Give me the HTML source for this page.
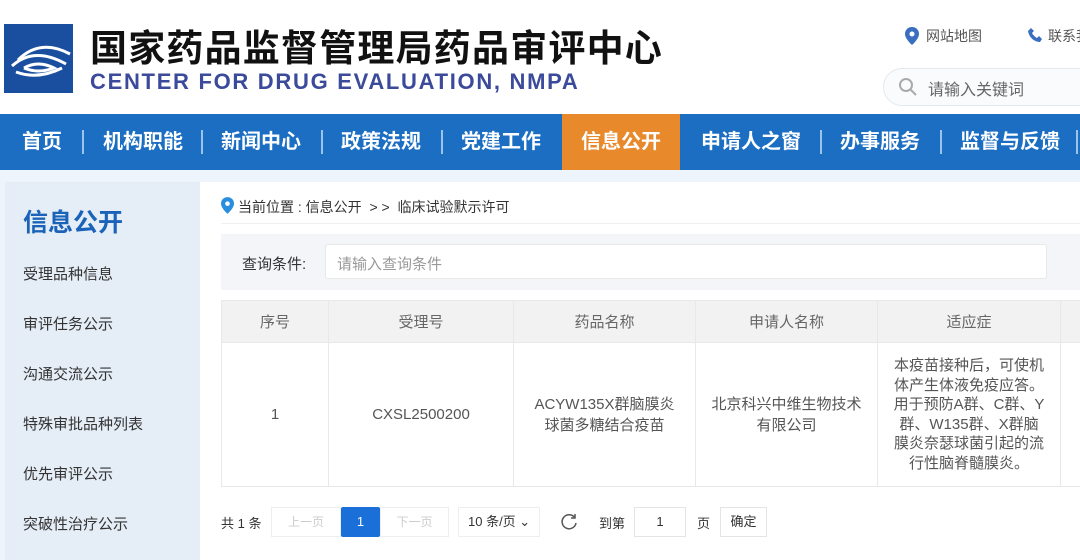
<!DOCTYPE html>
<html><head><meta charset="utf-8"><style>
*{margin:0;padding:0;box-sizing:border-box}
body{width:1080px;height:560px;overflow:hidden;background:#fff;font-family:"Liberation Sans","Noto Sans CJK SC",sans-serif;position:relative;color:#333}
.a{position:absolute;white-space:nowrap}
.nav{position:absolute;left:0;top:114px;width:1080px;height:56px;background:#1b6ec2}
.nav span{position:absolute;top:0;height:56px;line-height:56px;color:#fff;font-size:20px;font-weight:bold;text-align:center}
.sep{position:absolute;top:16px;width:2px;height:24px;background:#9cc3ea}
.side div{position:absolute;left:23px;font-size:15px;color:#333}
table{position:absolute;left:221px;top:300px;border-collapse:collapse;font-size:15px;color:#555;table-layout:fixed;width:880px}
td{border:1px solid #e8e8e8;text-align:center;vertical-align:middle;white-space:nowrap}
.h td{background:#f2f2f2;height:42px;color:#666}
</style></head><body>
<div class="a" style="left:4px;top:24px;width:69px;height:69px;background:#1a4fa0">
<svg width="69" height="69" viewBox="0 0 69 69"><g fill="none" stroke="#fff" stroke-width="3"><path d="M8 42 Q30 22 62 40"/><path d="M12 48 Q34 56 58 44"/><path d="M20 44 Q34 36 50 44 Q34 50 20 44"/><path d="M14 36 Q36 14 66 30"/></g></svg></div>
<div class="a" style="left:90px;top:18px;font-size:37px;font-weight:bold;color:#111;letter-spacing:1.2px">国家药品监督管理局药品审评中心</div>
<div class="a" style="left:90px;top:69px;font-size:22px;font-weight:bold;color:#3b4a9a;letter-spacing:1.7px">CENTER FOR DRUG EVALUATION, NMPA</div>
<svg class="a" style="left:905px;top:27px" width="14" height="18" viewBox="0 0 14 18"><path d="M7 0C3 0 0 3 0 7c0 5 7 11 7 11s7-6 7-11c0-4-3-7-7-7z" fill="#3a6fc0"/><circle cx="7" cy="7" r="2.5" fill="#fff"/></svg>
<div class="a" style="left:926px;top:26px;font-size:14px;color:#555">网站地图</div>
<svg class="a" style="left:1028px;top:27px" width="16" height="16" viewBox="0 0 16 16"><path d="M3 1l3 3-2 2c1 2 3 4 5 5l2-2 3 3-2 3C6 15 1 10 0 4z" fill="#3a6fc0"/></svg>
<div class="a" style="left:1048px;top:26px;font-size:14px;color:#555">联系我们</div>
<div class="a" style="left:883px;top:68px;width:220px;height:38px;border:1px solid #e4e8ee;border-radius:19px;background:#fafbfc"></div>
<svg class="a" style="left:898px;top:77px" width="20" height="20" viewBox="0 0 20 20"><circle cx="8" cy="8" r="6" fill="none" stroke="#aaa" stroke-width="2"/><path d="M12.5 12.5L18 18" stroke="#aaa" stroke-width="2"/></svg>
<div class="a" style="left:928px;top:76px;font-size:16px;color:#666">请输入关键词</div>
<div class="nav">
<span style="left:0;width:84px">首页</span><div class="sep" style="left:82px"></div>
<span style="left:84px;width:118px">机构职能</span><div class="sep" style="left:201px"></div>
<span style="left:202px;width:118px">新闻中心</span><div class="sep" style="left:321px"></div>
<span style="left:322px;width:118px">政策法规</span><div class="sep" style="left:441px"></div>
<span style="left:442px;width:118px">党建工作</span>
<span style="left:562px;width:118px;background:#e8892c">信息公开</span>
<span style="left:682px;width:138px">申请人之窗</span><div class="sep" style="left:820px"></div>
<span style="left:821px;width:118px">办事服务</span><div class="sep" style="left:940px"></div>
<span style="left:948px;width:124px">监督与反馈</span><div class="sep" style="left:1076px"></div>
</div>
<div class="a" style="left:0;top:170px;width:1080px;height:12px;background:#eef4fb"></div>
<div class="a" style="left:0;top:182px;width:5px;height:378px;background:#eef4fb"></div>
<div class="a side" style="left:5px;top:182px;width:195px;height:378px;background:#e5edf6"></div>
<div class="side">
<div style="top:203px;font-size:25px;font-weight:bold;color:#1b63b8">信息公开</div>
<div style="top:263px">受理品种信息</div>
<div style="top:313px">审评任务公示</div>
<div style="top:363px">沟通交流公示</div>
<div style="top:413px">特殊审批品种列表</div>
<div style="top:463px">优先审评公示</div>
<div style="top:513px">突破性治疗公示</div>
</div>
<svg class="a" style="left:221px;top:197px" width="13" height="17" viewBox="0 0 14 18"><path d="M7 0C3 0 0 3 0 7c0 5 7 11 7 11s7-6 7-11c0-4-3-7-7-7z" fill="#2a8ee0"/><circle cx="7" cy="7" r="2.5" fill="#fff"/></svg>
<div class="a" style="left:238px;top:197px;font-size:14px;color:#333">当前位置 : 信息公开 &nbsp;&gt; &gt;&nbsp; 临床试验默示许可</div>
<div class="a" style="left:221px;top:223px;width:859px;height:1px;background:#f0f0f0"></div>
<div class="a" style="left:221px;top:234px;width:859px;height:56px;background:#f3f5f8"></div>
<div class="a" style="left:242px;top:253px;font-size:15px;color:#333">查询条件:</div>
<div class="a" style="left:325px;top:244px;width:722px;height:35px;background:#fff;border:1px solid #e8e8e8;border-radius:3px"></div>
<div class="a" style="left:337px;top:253px;font-size:15px;color:#999">请输入查询条件</div>
<table>
<colgroup><col style="width:107px"><col style="width:185px"><col style="width:182px"><col style="width:182px"><col style="width:183px"><col style="width:41px"></colgroup>
<tr class="h"><td>序号</td><td>受理号</td><td>药品名称</td><td>申请人名称</td><td>适应症</td><td></td></tr>
<tr style="height:144px"><td>1</td><td>CXSL2500200</td><td style="line-height:21px">ACYW135X群脑膜炎<br>球菌多糖结合疫苗</td><td style="line-height:21px">北京科兴中维生物技术<br>有限公司</td><td style="line-height:19.5px">本疫苗接种后，可使机<br>体产生体液免疫应答。<br>用于预防A群、C群、Y<br>群、W135群、X群脑<br>膜炎奈瑟球菌引起的流<br>行性脑脊髓膜炎。</td><td></td></tr>
</table>
<div class="a" style="left:221px;top:513px;font-size:13px;color:#333">共 1 条</div>
<div class="a" style="left:271px;top:507px;width:70px;height:30px;border:1px solid #eee;font-size:12px;color:#ccc;text-align:center;line-height:28px">上一页</div>
<div class="a" style="left:341px;top:507px;width:39px;height:30px;background:#1b6fd8;color:#fff;font-size:13px;text-align:center;line-height:30px;border-radius:2px">1</div>
<div class="a" style="left:380px;top:507px;width:69px;height:30px;border:1px solid #eee;font-size:12px;color:#ccc;text-align:center;line-height:28px">下一页</div>
<div class="a" style="left:458px;top:507px;width:82px;height:30px;border:1px solid #eee;font-size:13px;color:#333;line-height:28px;padding-left:9px">10 条/页 ⌄</div>
<svg class="a" style="left:560px;top:512px" width="18" height="18" viewBox="0 0 18 18"><path d="M15 6A7 7 0 1 0 16 11" fill="none" stroke="#555" stroke-width="1.5"/><path d="M15 2v4h-4" fill="none" stroke="#555" stroke-width="1.5"/></svg>
<div class="a" style="left:599px;top:513px;font-size:13px;color:#333">到第</div>
<div class="a" style="left:634px;top:507px;width:52px;height:30px;border:1px solid #e4e4e4;font-size:13px;text-align:center;line-height:28px">1</div>
<div class="a" style="left:697px;top:513px;font-size:13px;color:#333">页</div>
<div class="a" style="left:720px;top:507px;width:47px;height:30px;border:1px solid #e4e4e4;font-size:13px;text-align:center;line-height:28px;color:#333">确定</div>
</body></html>
